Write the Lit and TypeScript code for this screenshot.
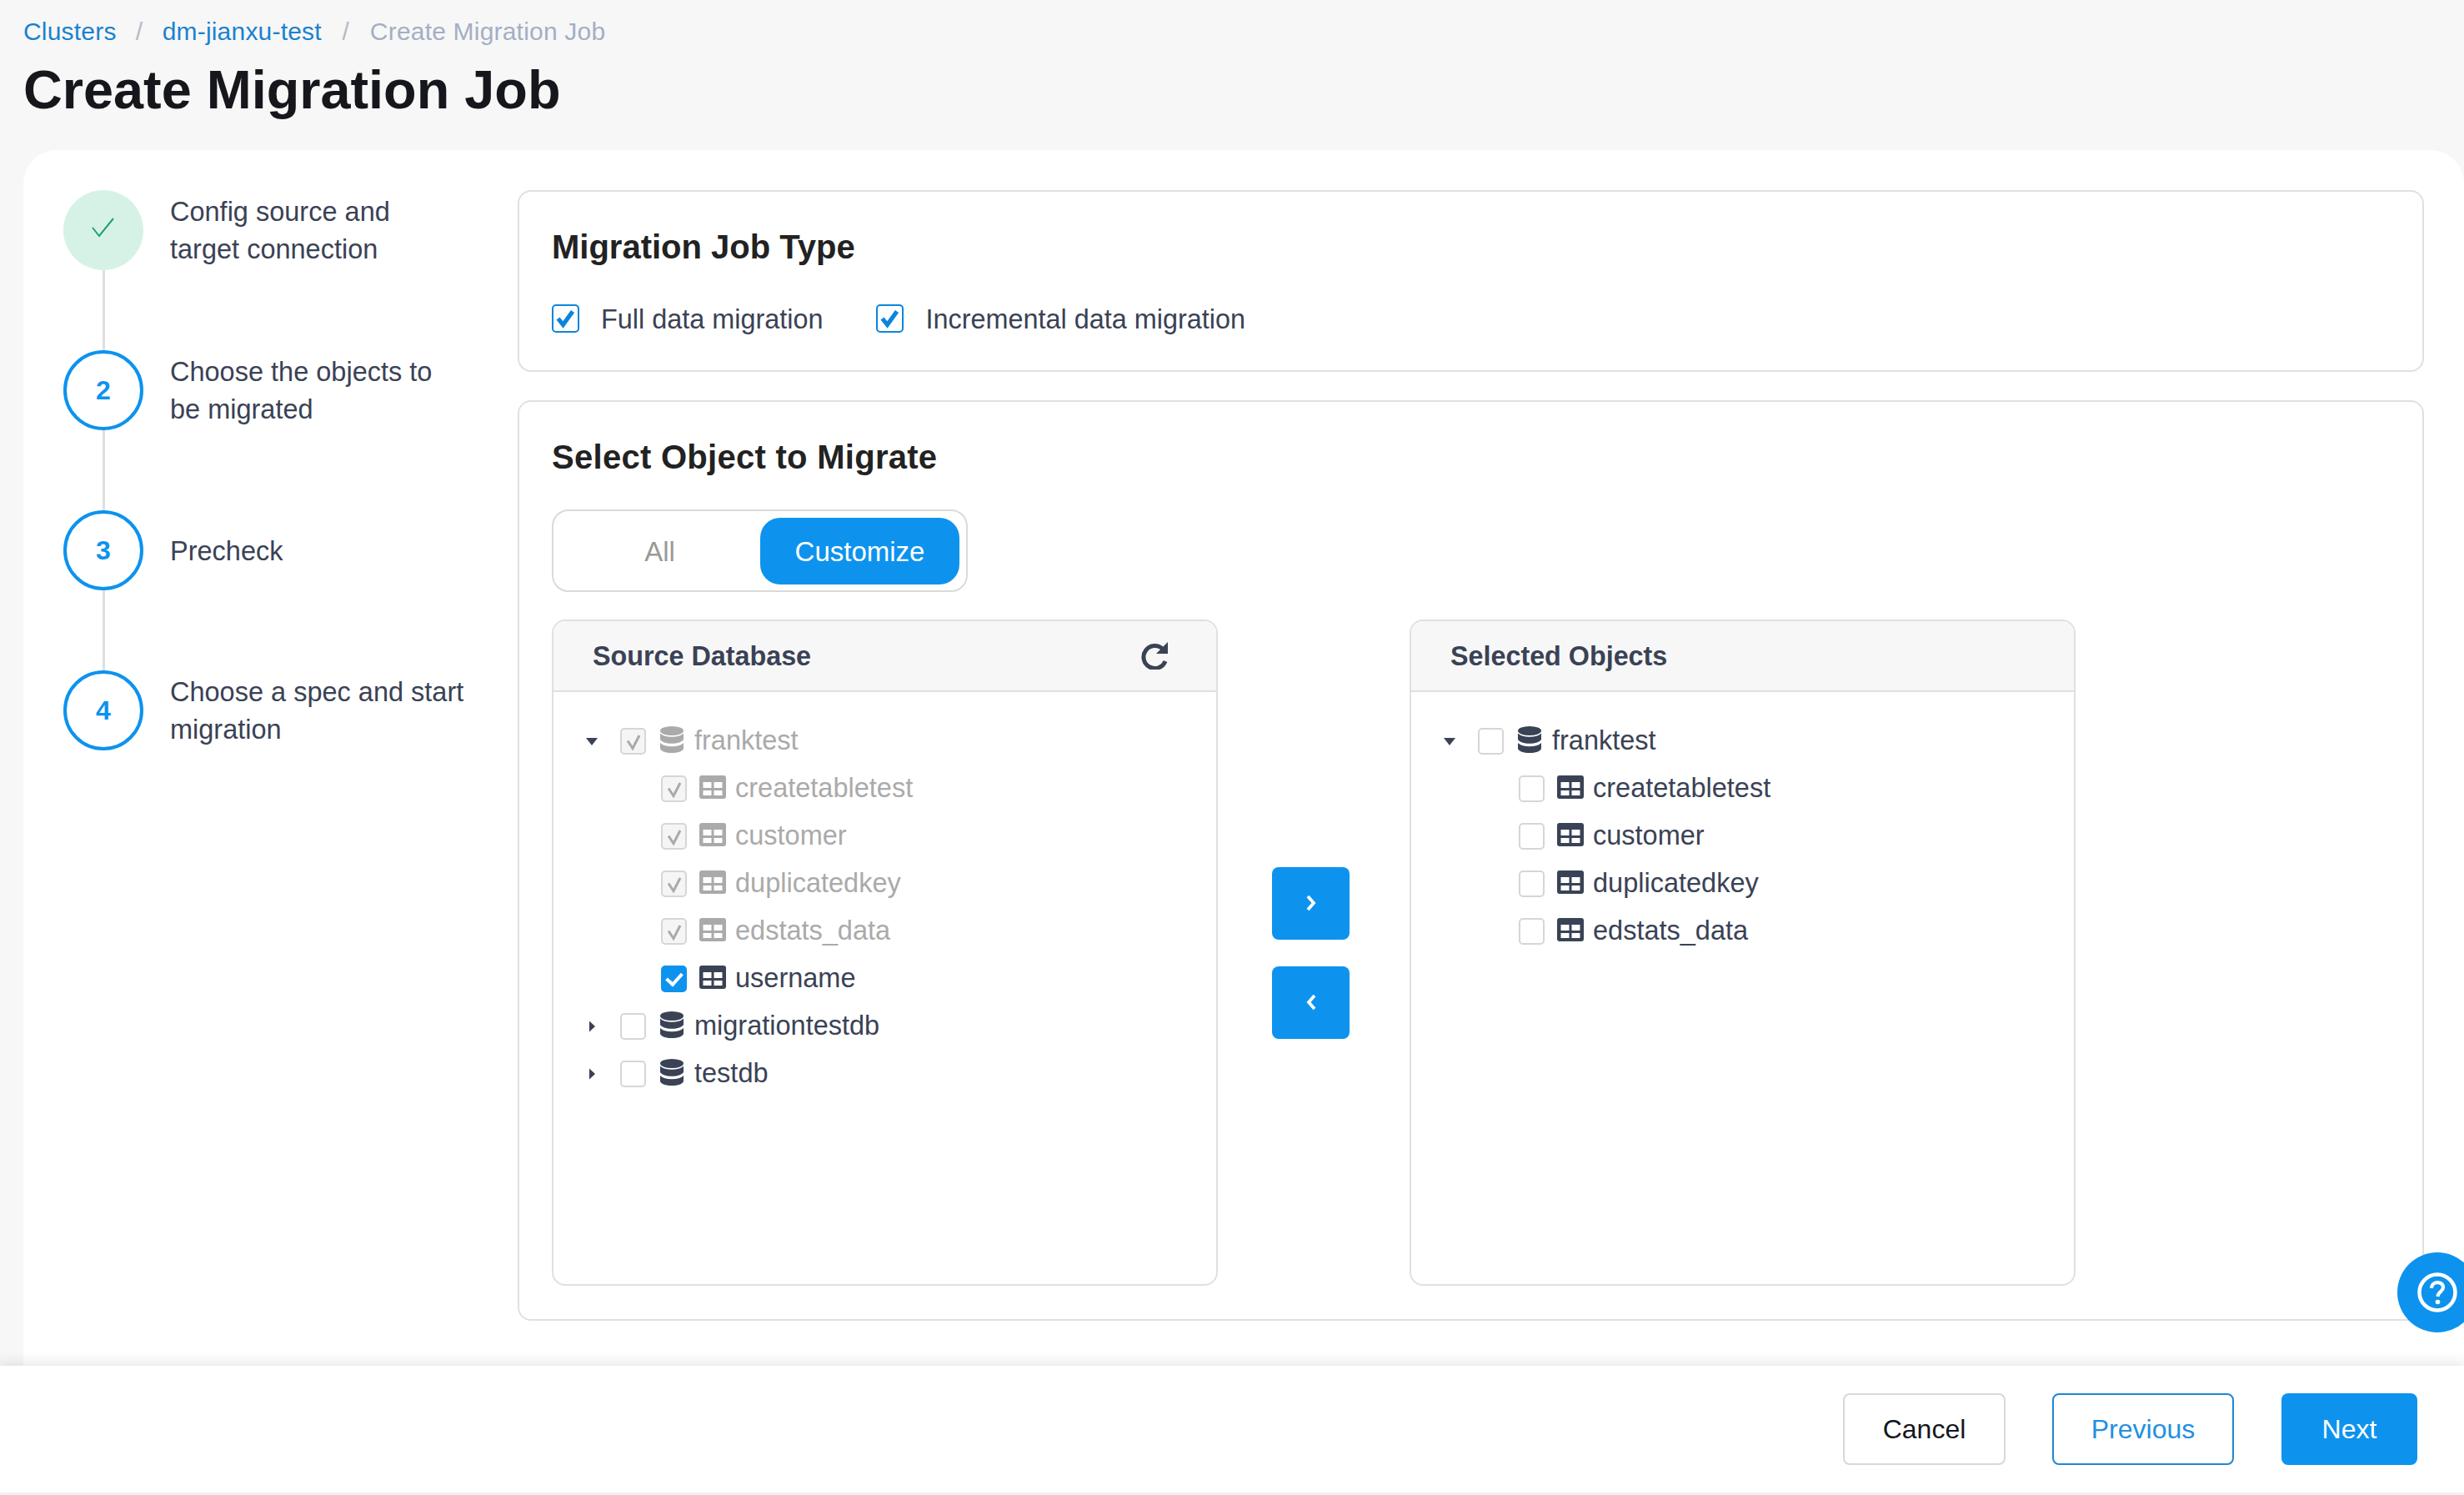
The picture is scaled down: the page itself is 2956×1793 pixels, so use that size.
import { LitElement, html, css, svg } from "lit";
import { customElement } from "lit/decorators.js";

const chk = (kind: string) => html`<span class="cb ${kind}">${kind === "big"
  ? html`<svg viewBox="0 0 29 30"><path d="M5.500 15l6 7.500L23 6.500" fill="none" stroke="#0b85dc" stroke-width="5.200"/></svg>`
  : kind === "dis"
    ? html`<svg viewBox="0 0 27 28"><path d="M7 13.500l6 9L21 7" fill="none" stroke="#aaa" stroke-width="3"/></svg>`
    : ""}</span>`;

const db = () => html`<svg class="db" viewBox="0 0 28 32" fill="currentColor">
  <ellipse cx="14" cy="5.500" rx="14" ry="5.500"/>
  <path d="M0 8.500c3 3 8 4.200 14 4.200s11-1.200 14-4.200v7.500c-2 3-7 4.800-14 4.800S2 19 0 16z"/>
  <path d="M0 20c3 3 8 4.200 14 4.200s11-1.200 14-4.200v7c-1 3-7 5-14 5S1 30 0 27z"/>
</svg>`;

const tbl = () => html`<svg class="tb" viewBox="0 0 32 28"><rect width="32" height="28" rx="3" fill="currentColor"/>
  <rect x="4.500" y="8" width="10" height="7" fill="#fff"/><rect x="17.500" y="8" width="10" height="7" fill="#fff"/>
  <rect x="4.500" y="18" width="10" height="6" fill="#fff"/><rect x="17.500" y="18" width="10" height="6" fill="#fff"/></svg>`;

const caret = (open: boolean) => html`<svg class="caret" viewBox="0 0 16 16" fill="#3a4255">${open
  ? svg`<path d="M1 4h14L8 13z"/>`
  : svg`<path d="M5 1.500v13l7-6.500z"/>`}</svg>`;

type Child = { name: string; cb: string; dim?: boolean };
type Db = { name: string; cb: string; dim?: boolean; open: boolean; children: Child[] };

const names = ["createtabletest", "customer", "duplicatedkey", "edstats_data"];
const source: Db[] = [
  { name: "franktest", cb: "dis", dim: true, open: true, children: [
    ...names.map((name) => ({ name, cb: "dis", dim: true })),
    { name: "username", cb: "fill" },
  ] },
  { name: "migrationtestdb", cb: "off", open: false, children: [] },
  { name: "testdb", cb: "off", open: false, children: [] },
];
const selected: Db[] = [
  { name: "franktest", cb: "off", open: true, children: names.map((name) => ({ name, cb: "off" })) },
];

const steps = [
  { n: "", label: ["Config source and", "target connection"] },
  { n: "2", label: ["Choose the objects to", "be migrated"] },
  { n: "3", label: ["Precheck"] },
  { n: "4", label: ["Choose a spec and start", "migration"] },
];

@customElement("app-root")
export class AppRoot extends LitElement {
  static styles = css`
    :host { display: block; position: relative; height: 1793px; overflow: hidden; background: #f7f7f7;
      font-family: "Liberation Sans", Arial, sans-serif; color: #3a4255; }
    .page { display: flex; flex-direction: column; height: 1793px; }
    .head { padding: 20px 28px 0; height: 160px; flex: none; }
    .crumbs { display: flex; align-items: center; height: 36px; font-size: 30px; letter-spacing: .2px; color: #1a82cf; }
    .crumbs i { font-style: normal; color: #b4bac6; width: 55px; text-align: center; }
    .crumbs span + i + span + i { width: 58px; }
    .crumbs .last { color: #a3afc4; }
    h1 { margin: 14px 0 0; font-size: 64.800px; line-height: 76px; font-weight: 700; color: #15171c; }
    .card { flex: 1; min-height: 0; margin-left: 28px; background: #fff; border-radius: 40px 40px 0 0;
      display: flex; padding: 48px 0 0 48px; }
    .stepper { width: 545px; flex: none; }
    .step { display: flex; height: 192px; }
    .rail { width: 96px; display: flex; flex-direction: column; align-items: center; flex: none; }
    .dot { width: 96px; height: 96px; box-sizing: border-box; border-radius: 50%; border: 4px solid #0d93ee; color: #0d93ee;
      display: flex; align-items: center; justify-content: center; font-size: 32px; font-weight: 700; flex: none; }
    .dot.done { border: 0; background: #d6f2e7; }
    .dot.done svg { width: 30px; height: 24px; margin-bottom: 6px; }
    .line { width: 3px; flex: 1; background: #dfdfdf; }
    .txt { margin-left: 32px; height: 96px; padding-top: 2px; box-sizing: border-box; display: flex; flex-direction: column; justify-content: center;
      font-size: 32.500px; line-height: 45px; white-space: nowrap; }
    .content { width: 2287px; flex: none; display: flex; flex-direction: column; gap: 34px; }
    .panel { border: 2px solid #e0e0e0; border-radius: 16px; padding: 42px 39px 45px; box-sizing: border-box; }
    .panel.b { height: 1104px; }
    h2 { margin: 0; font-size: 40px; line-height: 48px; font-weight: 700; color: #222; }
    h2.wide { letter-spacing: .28px; }
    .types { display: flex; align-items: center; margin-top: 45px; font-size: 32.400px; height: 34px; }
    .types span:not(.cb):not(.gap) { padding-top: 2px; }
    .types .cb { margin-right: 26px; }
    .types .gap { width: 64px; }
    .cb { display: block; box-sizing: border-box; width: 31px; height: 32px; border: 2px solid #d6d6d6; border-radius: 5px; background: #fff; flex: none; }
    .cb svg { display: block; width: 100%; height: 100%; }
    .cb.dis { background: #f5f5f5; }
    .cb.big { width: 33px; height: 34px; border-color: #0b85dc; }
    .cb.fill { background: #0d93ee; border: 0; }
    .cb.fill::after { content: ""; display: block; width: 8px; height: 15px; margin: 5px 0 0 10px; border: solid #fff; border-width: 0 4px 4px 0; transform: rotate(42deg); }
    .toggle { margin-top: 39px; width: 499px; height: 99px; box-sizing: border-box; border: 2px solid #dadada; border-radius: 20px;
      display: flex; align-items: center; padding: 0 8px 0 7px; font-size: 33px; }
    .toggle .all { flex: 1; text-align: center; color: #999; padding-top: 2px; }
    .toggle .cust { width: 239px; height: 80px; padding-top: 2px; box-sizing: border-box; border-radius: 24px; background: #0d93ee; color: #fff;
      display: flex; align-items: center; justify-content: center; }
    .transfer { display: flex; margin-top: 33px; height: 799px; }
    .box { width: 799px; box-sizing: border-box; border: 2px solid #e0e0e0; border-radius: 16px; overflow: hidden; flex: none; }
    .box header { height: 85px; box-sizing: border-box; background: #f7f7f7; border-bottom: 2px solid #e0e0e0;
      display: flex; align-items: center; justify-content: space-between; padding: 1px 56px 0 47px;
      font-size: 32.300px; font-weight: 700; color: #3a4255; }
    .box header svg { width: 34px; height: 34px; margin-top: -2px; }
    .tree { padding: 30px 0 0 38px; font-size: 32.500px; }
    .row { display: flex; align-items: center; height: 57px; white-space: nowrap; }
    .row.dim { color: #aaa; }
    .caret { width: 16px; height: 16px; margin-right: 26px; flex: none; }
    .db { width: 28px; height: 32px; margin: 0 13px 3px 17px; flex: none; }
    .kid { padding-left: 91px; }
    .tb { width: 32px; height: 28px; margin: 0 11px 3px 15px; flex: none; }
    .mid { width: 230px; flex: none; display: flex; flex-direction: column; justify-content: center; gap: 32px; padding-left: 65px; box-sizing: border-box; }
    .arrow { width: 93px; height: 87px; border-radius: 8px; background: #0d93ee; display: flex; align-items: center; justify-content: center; }
    .arrow svg { width: 14px; height: 20px; }
    .foot { height: 152px; flex: none; margin-bottom: 3px; background: #fff; position: relative; z-index: 1;
      box-shadow: 0 -3px 14px rgba(120, 130, 150, .22);
      display: flex; align-items: center; justify-content: flex-end; padding-right: 56px; font-size: 32px; }
    .btn { height: 86px; box-sizing: border-box; border-radius: 8px; display: flex; align-items: center; justify-content: center; }
    .cancel { width: 195px; border: 2px solid #d8d8d8; color: #15171c; }
    .prev { width: 218px; margin-left: 56px; border: 2px solid #1f87d4; color: #2290e0; }
    .next { width: 163px; margin-left: 57px; background: #0d93ee; color: #fff; }
    .help { position: absolute; left: 2876px; top: 1502px; width: 96px; height: 96px; border-radius: 50%; background: #0d93ee;
      z-index: 2; display: flex; align-items: center; padding-left: 24px; box-sizing: border-box; }
    .help svg { width: 48px; height: 48px; }
  `;

  private tree(list: Db[]) {
    return html`<div class="tree">${list.map((d) => html`
      <div class="row ${d.dim ? "dim" : ""}">${caret(d.open)}${chk(d.cb)}${db()}<span>${d.name}</span></div>
      ${d.children.map((c) => html`<div class="row kid ${c.dim ? "dim" : ""}">${chk(c.cb)}${tbl()}<span>${c.name}</span></div>`)}
    `)}</div>`;
  }

  render() {
    return html`<div class="page">
      <div class="head">
        <div class="crumbs"><span>Clusters</span><i>/</i><span>dm-jianxu-test</span><i>/</i><span class="last">Create Migration Job</span></div>
        <h1>Create Migration Job</h1>
      </div>
      <div class="card">
        <div class="stepper">
          ${steps.map((s, i) => html`<div class="step">
            <div class="rail">
              ${s.n
                ? html`<div class="dot">${s.n}</div>`
                : html`<div class="dot done"><svg viewBox="0 0 30 24"><path d="M2 12l8 10L27 1" fill="none" stroke="#1f9e6c" stroke-width="2"/></svg></div>`}
              ${i < steps.length - 1 ? html`<div class="line"></div>` : ""}
            </div>
            <div class="txt">${s.label.map((l) => html`<div>${l}</div>`)}</div>
          </div>`)}
        </div>
        <div class="content">
          <section class="panel">
            <h2>Migration Job Type</h2>
            <div class="types">
              ${chk("big")}<span>Full data migration</span><span class="gap"></span>
              ${chk("big")}<span>Incremental data migration</span>
            </div>
          </section>
          <section class="panel b">
            <h2 class="wide">Select Object to Migrate</h2>
            <div class="toggle"><span class="all">All</span><span class="cust">Customize</span></div>
            <div class="transfer">
              <div class="box">
                <header><span>Source Database</span>
                  <svg viewBox="0 0 34 34"><path d="M26 9.500A13.500 13.500 0 1 0 29 24" fill="none" stroke="#3a4255" stroke-width="5"/><path d="M32 1v14H18z" fill="#3a4255"/></svg>
                </header>
                ${this.tree(source)}
              </div>
              <div class="mid">
                <div class="arrow"><svg viewBox="0 0 14 20"><path d="M3 2l7 8-7 8" fill="none" stroke="#fff" stroke-width="3.800"/></svg></div>
                <div class="arrow"><svg viewBox="0 0 14 20"><path d="M11 2l-7 8 7 8" fill="none" stroke="#fff" stroke-width="3.800"/></svg></div>
              </div>
              <div class="box">
                <header><span>Selected Objects</span></header>
                ${this.tree(selected)}
              </div>
            </div>
          </section>
        </div>
      </div>
      <div class="foot">
        <div class="btn cancel">Cancel</div>
        <div class="btn prev">Previous</div>
        <div class="btn next">Next</div>
      </div>
      <div class="help"><svg viewBox="0 0 48 48"><circle cx="24" cy="24" r="21.500" fill="none" stroke="#fff" stroke-width="4.500"/>
        <path d="M17 19c0-9 14-9 14-1 0 5-6 5-6.500 11" fill="none" stroke="#fff" stroke-width="4.200"/><circle cx="24.500" cy="35.500" r="2.800" fill="#fff"/></svg></div>
    </div>`;
  }
}
